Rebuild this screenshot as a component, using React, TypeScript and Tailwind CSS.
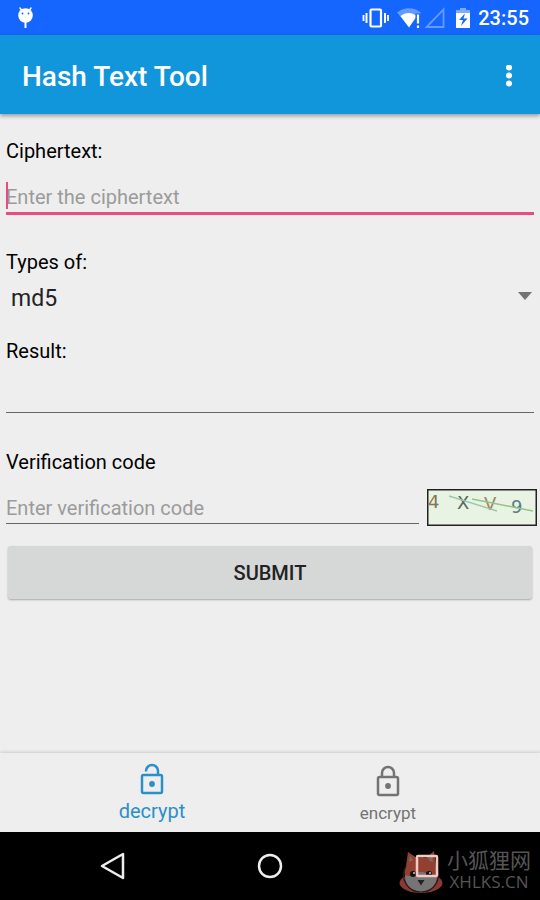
import { useState } from 'react'

const HASH_TYPES = ['md5', 'sha1', 'sha256', 'sha512']

function StatusBar() {
  return (
    <div className="flex h-[35px] items-center justify-between bg-[#1565ff] pl-[17px] pr-[11px] text-white">
      <svg width="17" height="24" viewBox="0 0 17 24" aria-hidden="true">
        <path d="M4.500 4 3 2M12.500 4 14 2" fill="none" stroke="#fff" strokeWidth="1.500" strokeLinecap="round" />
        <path d="M8.500 16v6" stroke="#fff" strokeWidth="2" />
        <circle cx="8.500" cy="9.500" r="7.300" fill="#fff" />
        <circle cx="5.500" cy="7.500" r="0.900" fill="#1565ff" />
        <circle cx="11.500" cy="7.500" r="0.900" fill="#1565ff" />
      </svg>

      <div className="flex items-center">
        <svg width="27" height="22" viewBox="0 0 27 22" fill="none" stroke="#fff" aria-hidden="true">
          <rect x="8.500" y="2.500" width="10.500" height="17" rx="1" strokeWidth="2.200" />
          <path d="M4.500 6v10M23 6v10" strokeWidth="2" />
          <path d="M1.500 8v6M26 8v6" strokeWidth="1.800" />
        </svg>
        <svg className="ml-2" width="24" height="22" viewBox="0 0 24 22" aria-hidden="true">
          <path d="M0 5.500C7-.3 17-.3 24 5.500L12 20Z" fill="#fff" fillOpacity="0.350" />
          <path d="M3.500 9c5-4 11.500-4 16 0L12 20.500Z" fill="#fff" />
          <path d="M18.500 6.500H24v15h-5.500Z" fill="#1565ff" />
          <path d="M21 7.500v9M21 18.500v2.500" stroke="#fff" strokeWidth="2.200" />
        </svg>
        <svg className="ml-1" width="20" height="22" viewBox="0 0 20 22" aria-hidden="true">
          <path d="M18.500 2.500v17.500H1.500Z" fill="none" stroke="#fff" strokeOpacity="0.350" strokeWidth="1.800" />
        </svg>
        <svg className="ml-[11px]" width="14" height="22" viewBox="0 0 14 22" aria-hidden="true">
          <path d="M4 1h6v2h4v4H0V3h4Z" fill="#fff" fillOpacity="0.450" />
          <path d="M0 6h14v15H0Z" fill="#fff" />
          <path d="M9 6.500 3 13h4l-2 6 6.500-7.500H7.500Z" fill="#1565ff" />
        </svg>
        <span className="ml-2 text-[20px] font-medium leading-6">23:55</span>
      </div>
    </div>
  )
}

function Toolbar() {
  return (
    <header className="z-10 flex h-[79px] items-center justify-between bg-[#1296db] pl-[22px] pr-[19px] pt-1 text-white shadow-[0_2px_4px_rgba(0,0,0,0.35)]">
      <h1 className="text-[28px] font-medium leading-8">Hash Text Tool</h1>
      <button type="button" aria-label="More options" className="flex h-10 w-6 items-center justify-center">
        <svg width="8" height="24" viewBox="0 0 8 24" fill="#fff">
          <circle cx="4" cy="2.500" r="3" />
          <circle cx="4" cy="10.500" r="3" />
          <circle cx="4" cy="18.500" r="3" />
        </svg>
      </button>
    </header>
  )
}

function Captcha() {
  return (
    <svg className="h-[37px] w-[110px] shrink-0" viewBox="0 0 110 37" role="img" aria-label="Verification image">
      <rect x="0.750" y="0.750" width="108.500" height="35.500" fill="#e8f3e3" stroke="#222" strokeWidth="1.500" />
      <g fontFamily="DejaVu Sans" fontSize="18">
        <text x="1" y="19" fill="#857455">4</text>
        <text x="30" y="20" fill="#59645d">X</text>
        <text x="57" y="21" fill="#a1835f">V</text>
        <text x="84" y="24" fill="#5c7a86">9</text>
      </g>
      <path d="M22 7 70 22" stroke="#9cc7ac" strokeWidth="1.400" />
      <path d="M45 10 106 22" stroke="#94c38a" strokeWidth="1.400" />
    </svg>
  )
}

function LockIcon({ open }: { open: boolean }) {
  return (
    <svg width="24" height="32" viewBox="0 0 24 32" fill="none" stroke="currentColor" strokeWidth="2.500">
      <rect x="2" y="12" width="20" height="18" rx="1.500" />
      <path d={open ? 'M6 8.500V8a6 6 0 0 1 12 0v4' : 'M6 12V8a6 6 0 0 1 12 0v4'} />
      <circle cx="12" cy="21" r="2.900" fill="currentColor" stroke="none" />
    </svg>
  )
}

function Watermark() {
  return (
    <div className="pointer-events-none absolute right-[9px] top-[17px] flex items-center gap-1 text-[#555]">
      <svg width="44" height="46" viewBox="0 0 44 46" aria-hidden="true">
        <ellipse cx="22" cy="34" rx="21.500" ry="10" fill="#8a3a32" />
        <path d="M7 17 9 3l9 6c3-1 6-1 9 0l8-7 2 15c2 5 1 10 0 13H7c-2-4-2-9 0-13Z" fill="#92402f" />
        <path d="M10 13 11 7l3 4ZM34 13 33 6l-4 5Z" fill="#7d6c6c" />
        <path d="M6 26c5 2 9 1 13-3h6c4 4 8 5 13 3 0 10-7 17-16 17S6 36 6 26Z" fill="#757575" />
        <path d="M7 17c-7 13 2 26 15 26s22-13 15-26" fill="none" stroke="#271c1c" strokeWidth="1.200" />
        <circle cx="14" cy="25" r="3" fill="#111" />
        <circle cx="30" cy="25" r="3" fill="#111" />
        <circle cx="15" cy="24" r="0.900" fill="#ddd" />
        <circle cx="31" cy="24" r="0.900" fill="#ddd" />
        <path d="M18.500 31h7L22 36.500Z" fill="#222" />
      </svg>
      <div className="text-center">
        <div className="font-['Noto_Sans_CJK_SC',sans-serif] text-[21px] leading-5">小狐狸网</div>
        <div className="font-['Open_Sans',sans-serif] text-[17px] leading-[26px]">XHLKS.CN</div>
      </div>
    </div>
  )
}

export default function App() {
  const [tab, setTab] = useState<'decrypt' | 'encrypt'>('decrypt')
  const [text, setText] = useState('')
  const [type, setType] = useState('md5')
  const [code, setCode] = useState('')

  return (
    <div className="flex min-h-screen flex-col bg-[#eee] font-[Roboto,sans-serif] text-black">
      <StatusBar />
      <Toolbar />

      <main className="flex-1 pt-[25px]">
        <form onSubmit={e => e.preventDefault()} className="text-[20px] leading-6">
          <div className="px-1.5">
            <label htmlFor="cipher" className="block">Ciphertext:</label>
            <div className="relative">
              <input
                id="cipher"
                value={text}
                onChange={e => setText(e.target.value)}
                placeholder="Enter the ciphertext"
                className="block h-[52px] w-full border-b-3 border-[#e94d80] pt-[18px] caret-[#e94d80] outline-none placeholder:text-[#9b9b9b]"
              />
              {!text && <span className="absolute bottom-1.5 left-0 h-[27px] w-0.5 bg-[#e94d80]" />}
            </div>

            <label htmlFor="type" className="mt-[35px] block">Types of:</label>
            <div className="relative">
              <select
                id="type"
                value={type}
                onChange={e => setType(e.target.value)}
                className="block h-12 w-full appearance-none pl-[5px] pt-0.5 text-[23px] text-[#222] outline-none"
              >
                {HASH_TYPES.map(t => (
                  <option key={t}>{t}</option>
                ))}
              </select>
              <svg className="pointer-events-none absolute right-0.5 top-[18px]" width="14" height="8" viewBox="0 0 14 8">
                <path d="M0 0h14L7 8Z" fill="#737373" />
              </svg>
            </div>

            <label htmlFor="result" className="mt-[17px] block">Result:</label>
            <input id="result" readOnly className="block h-[50px] w-full border-b border-[#666] pt-[18px] outline-none" />

            <label htmlFor="code" className="mt-[37px] block">Verification code</label>
          </div>

          <div className="flex h-[52px] items-end gap-2 pl-1.5 pr-[3px]">
            <input
              id="code"
              value={code}
              onChange={e => setCode(e.target.value)}
              placeholder="Enter verification code"
              className="h-[50px] min-w-0 flex-1 self-start border-b border-[#666] pt-[18px] outline-none placeholder:text-[#9b9b9b]"
            />
            <Captcha />
          </div>

          <div className="px-2 pt-5">
            <button
              type="submit"
              className="h-[53px] w-full rounded-[3px] bg-[#d6d7d7] font-medium text-[#222] shadow-[0_1px_2px_rgba(0,0,0,0.3)]"
            >
              SUBMIT
            </button>
          </div>
        </form>
      </main>

      <nav className="flex h-[79px] justify-center shadow-[0_-1px_3px_rgba(0,0,0,0.15)]">
        <button
          type="button"
          onClick={() => setTab('decrypt')}
          className={`flex w-[236px] flex-col items-center pt-2.5 ${
            tab === 'decrypt' ? 'text-[20px] text-[#2b90c8]' : 'text-[17px] text-[#737373]'
          }`}
        >
          <LockIcon open />
          <span className="mt-1 leading-6">decrypt</span>
        </button>
        <button
          type="button"
          onClick={() => setTab('encrypt')}
          className={`flex w-[236px] flex-col items-center pt-3 ${
            tab === 'encrypt' ? 'text-[20px] text-[#2b90c8]' : 'text-[17px] text-[#737373]'
          }`}
        >
          <LockIcon open={false} />
          <span className="mt-1 leading-6">encrypt</span>
        </button>
      </nav>

      <div className="relative flex h-[68px] items-center justify-center bg-black">
        <button type="button" aria-label="Back" className="flex w-[157px] justify-center">
          <svg width="28" height="28" viewBox="0 0 28 28" fill="none" stroke="#eee" strokeWidth="2.500" strokeLinejoin="round">
            <path d="M24 2v24L3 14Z" />
          </svg>
        </button>
        <button type="button" aria-label="Home" className="flex w-[157px] justify-center">
          <svg width="28" height="28" viewBox="0 0 28 28" fill="none" stroke="#eee" strokeWidth="2.500">
            <circle cx="14" cy="14" r="11" />
          </svg>
        </button>
        <button type="button" aria-label="Recent apps" className="relative z-10 flex w-[157px] justify-center">
          <svg width="28" height="28" viewBox="0 0 28 28" fill="none" stroke="#f3c9c4" strokeWidth="2.500">
            <rect x="4" y="4" width="20" height="20" rx="1" />
          </svg>
        </button>
        <Watermark />
      </div>
    </div>
  )
}
